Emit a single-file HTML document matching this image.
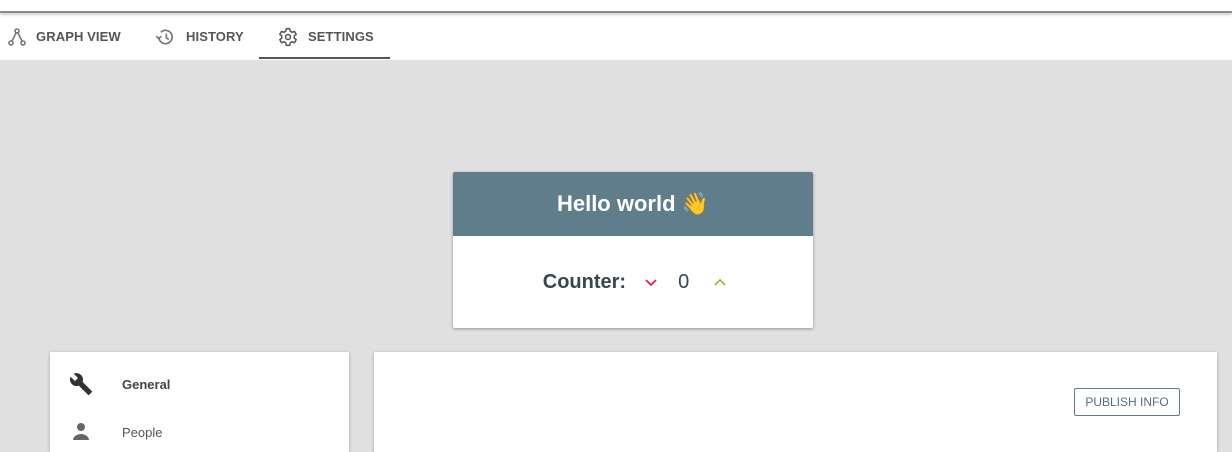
<!DOCTYPE html><html><head><style>
body{margin:0;width:1232px;height:447px;overflow:hidden;background:#e0e0e0;font-family:"Liberation Sans",sans-serif;position:relative}
.top{position:absolute;left:0;top:0;width:1232px;height:11px;background:#fff}
.bar{position:absolute;left:0;top:11px;width:1232px;height:49px;background:#fff;overflow:hidden}
.line{position:absolute;left:0;top:0;width:1232px;height:2px;background:#8a8a8a;box-shadow:0 1px 3px rgba(0,0,0,.35)}
.tab{position:absolute;top:1px;height:49px;display:flex;align-items:center;font-size:13px;font-weight:bold;color:#555;letter-spacing:.1px}
.tab svg{margin-right:10px}
.ind{position:absolute;left:259px;top:57px;width:131px;height:2px;background:#555}
.card{position:absolute;left:453px;top:172px;width:360px;height:156px;background:#fff;box-shadow:0 1px 3px rgba(0,0,0,.35);border-radius:2px;overflow:hidden}
.hd{height:64px;background:#607d8b;color:#fff;font-size:22px;font-weight:bold;display:flex;align-items:center;justify-content:center}
.ct{height:92px;display:flex;align-items:center;justify-content:center;color:#37474f;font-size:20px;padding-left:4px}
.p{position:absolute;background:#fff;box-shadow:0 1px 3px rgba(0,0,0,.3)}
.it{position:absolute;left:72px;font-size:13px;font-weight:bold;color:#444}
.btn{position:absolute;left:1074px;top:388px;width:104px;height:26px;border:1px solid #607d8b;border-radius:2px;font-size:12px;color:#546e7a;display:flex;align-items:center;justify-content:center}
</style></head><body>
<div class="top"></div>
<div class="bar"><div class="line"></div>
<div class="tab" style="left:8px"><svg width="18" height="20" viewBox="0 0 18 20" fill="none" stroke="#777" stroke-width="1.6"><circle cx="9" cy="4" r="2"/><circle cx="3" cy="16" r="2"/><circle cx="15" cy="16" r="2"/><path d="M8 6L4 14M10 6L14 14"/></svg>GRAPH VIEW</div>
<div class="tab" style="left:155px"><svg width="21" height="20" viewBox="0 0 24 24" fill="none" stroke="#777" stroke-width="2"><path d="M4 12a8 8 0 1 0 2.4-5.7"/><path d="M1 11l3 3 3-3"/><path d="M13 8v5l3 2"/></svg>HISTORY</div>
<div class="tab" style="left:278px"><svg width="20" height="20" viewBox="0 0 24 24" fill="none" stroke="#555" stroke-width="1.8"><circle cx="12" cy="12" r="3"/><path d="M10 2h4l.6 3 2.3 1.3 2.9-1 2 3.4-2.3 2v2.6l2.3 2-2 3.4-2.9-1-2.3 1.3-.6 3h-4l-.6-3-2.3-1.3-2.9 1-2-3.4 2.3-2v-2.6l-2.3-2 2-3.4 2.9 1L9.4 5z"/></svg>SETTINGS</div>
</div>
<div class="ind"></div>
<div class="card"><div class="hd">Hello world 👋</div>
<div class="ct"><b>Counter:</b><svg style="margin:2px 20px 0 18px" width="14" height="10" viewBox="0 0 14 10" fill="none" stroke="#e91e63" stroke-width="1.8"><path d="M2 2l5 5 5-5"/></svg>0<svg style="margin-left:24px" width="14" height="10" viewBox="0 0 14 10" fill="none" stroke="#8bc34a" stroke-width="1.8"><path d="M2 8l5-5 5 5"/></svg></div></div>
<div class="p" style="left:50px;top:352px;width:299px;height:100px">
<svg style="position:absolute;left:19px;top:20px" width="24" height="24" viewBox="0 0 24 24"><path fill="#333" d="M22.7 19l-9.1-9.1c.9-2.3.4-5-1.5-6.9-2-2-5-2.4-7.4-1.3L9 6 6 9 1.6 4.7C.4 7.1.9 10.1 2.9 12.1c1.9 1.9 4.6 2.4 6.9 1.5l9.1 9.1c.4.4 1 .4 1.4 0l2.3-2.3c.5-.4.5-1.1.1-1.4z"/></svg>
<div class="it" style="top:25px">General</div>
<svg style="position:absolute;left:21px;top:70px" width="20" height="20" viewBox="0 0 20 20"><circle cx="10" cy="5" r="4" fill="#666"/><path d="M2 18c0-4 5-6 8-6s8 2 8 6z" fill="#666"/></svg>
<div class="it" style="top:73px;font-weight:normal;color:#555">People</div>
</div>
<div class="p" style="left:374px;top:352px;width:843px;height:100px"></div>
<div class="btn">PUBLISH INFO</div>
</body></html>
